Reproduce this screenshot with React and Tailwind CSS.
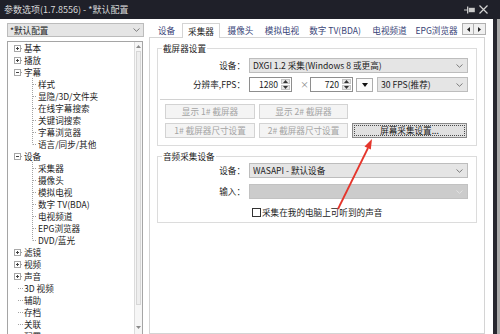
import React from "react";

const TREE = [
  { t: "基本", k: "plus" },
  { t: "播放", k: "plus" },
  { t: "字幕", k: "minus" },
  { t: "样式", k: "child" },
  { t: "显隐/3D/文件夹", k: "child" },
  { t: "在线字幕搜索", k: "child" },
  { t: "关键词搜索", k: "child" },
  { t: "字幕浏览器", k: "child" },
  { t: "语言/同步/其他", k: "last" },
  { t: "设备", k: "minus" },
  { t: "采集器", k: "child" },
  { t: "摄像头", k: "child" },
  { t: "模拟电视", k: "child" },
  { t: "数字 TV(BDA)", k: "child" },
  { t: "电视频道", k: "child" },
  { t: "EPG浏览器", k: "child" },
  { t: "DVD/蓝光", k: "last" },
  { t: "滤镜", k: "plus" },
  { t: "视频", k: "plus" },
  { t: "声音", k: "plus" },
  { t: "3D 视频", k: "leaf" },
  { t: "辅助", k: "leaf" },
  { t: "存档", k: "leaf" },
  { t: "关联", k: "leaf" },
  { t: "配置", k: "leaf" },
];

const TABS = [
  { t: "设备", w: "w-[31px]" },
  { t: "采集器", w: "w-[38px]", on: true },
  { t: "摄像头", w: "w-[41px]" },
  { t: "模拟电视", w: "w-[42px]" },
  { t: "数字 TV(BDA)", w: "w-[64px]" },
  { t: "电视频道", w: "w-[45px]" },
  { t: "EPG浏览器", w: "w-[49px]" },
];

const LINE = "#a3a3a3";

const Chevron = ({ color = "#707070" }) => (
  <svg width="7" height="4" viewBox="0 0 7 4" className="shrink-0">
    <path d="M0.5 0.5 L3.5 3.3 L6.5 0.5" fill="none" stroke={color} strokeWidth="0.9" />
  </svg>
);

const Tri = ({ down }) => (
  <svg width="5" height="3" viewBox="0 0 5 3">
    <path d={down ? "M0 0 H5 L2.5 3 Z" : "M0 3 H5 L2.5 0 Z"} fill="#333" />
  </svg>
);

const Gutter = ({ k }) => {
  if (k === "child" || k === "last")
    return (
      <svg width="30" height="12" className="shrink-0">
        <line x1="24.5" y1="0" x2="24.5" y2={k === "last" ? 6.5 : 12} stroke={LINE} strokeDasharray="1 1" />
        <line x1="25" y1="6.5" x2="29" y2="6.5" stroke={LINE} strokeDasharray="1 1" />
      </svg>
    );
  if (k === "leaf")
    return (
      <svg width="16" height="12" className="shrink-0">
        <line x1="10" y1="6.5" x2="15" y2="6.5" stroke={LINE} strokeDasharray="1 1" />
      </svg>
    );
  return (
    <svg width="16" height="12" className="shrink-0">
      <rect x="6.5" y="3.5" width="6" height="6" fill="#fff" stroke="#a8a8a8" />
      <line x1="8" y1="6.5" x2="11" y2="6.5" stroke="#444" />
      {k === "plus" && <line x1="9.5" y1="5" x2="9.5" y2="8" stroke="#444" />}
      <line x1="13" y1="6.5" x2="15" y2="6.5" stroke={LINE} strokeDasharray="1 1" />
    </svg>
  );
};

const Combo = ({ text, w, disabled }) => (
  <div
    className={`${w} h-[15px] border flex items-center pl-[3px] pr-[4px] ${
      disabled ? "bg-[#cccccc] border-[#c2c2c2]" : "bg-[#e5e5e5] border-[#bdbdbd]"
    }`}
  >
    <span className="flex-1 truncate leading-[13px]">{text}</span>
    <Chevron color={disabled ? "#e4e4e4" : "#707070"} />
  </div>
);

const Spin = ({ value }) => (
  <div className="w-[43px] h-[15px] border border-[#8e8e8e] bg-white flex">
    <div className="flex-1 text-right pr-[3px] leading-[13px]">{value}</div>
    <div className="w-[10px] flex flex-col py-px pr-px gap-px">
      <div className="flex-1 bg-[#e6e6e6] border border-[#c4c4c4] flex items-center justify-center">
        <Tri />
      </div>
      <div className="flex-1 bg-[#e6e6e6] border border-[#c4c4c4] flex items-center justify-center">
        <Tri down />
      </div>
    </div>
  </div>
);

const Btn = ({ children, w, active }) =>
  active ? (
    <div className={`${w} h-[15px] border border-[#8a8a8a] bg-[#e1e1e1] p-px text-[#1a1a1a]`}>
      <div className="w-full h-full border border-dotted border-[#4a4a4a] flex items-center justify-center leading-[11px]">
        {children}
      </div>
    </div>
  ) : (
    <div className={`${w} h-[15px] border border-[#d3d3d3] bg-[#f4f4f4] text-[#a4a4a4] flex items-center justify-center leading-[13px]`}>
      {children}
    </div>
  );

const Label = ({ children }) => (
  <span className="w-[87px] shrink-0 text-right leading-[13px]">{children}</span>
);

export default function App() {
  return (
    <div className="relative w-[500px] h-[334px] overflow-hidden flex flex-col bg-white text-[8.6px] text-[#1c1c1c] font-['Noto_Sans_CJK_SC',sans-serif]">
      {/* title bar */}
      <div className="h-[19px] shrink-0 bg-[#1f2029] flex items-center pl-[4px] pr-[12px]">
        <span className="text-[9px] leading-[12px] text-[#d9d9d9]">参数选项(1.7.8556) - *默认配置</span>
        <div className="ml-auto flex items-center gap-[4px]">
          <svg width="11" height="8" viewBox="0 0 11 8">
            <path d="M0 4 H3" stroke="#c9c9c9" strokeWidth="1" />
            <rect x="3" y="0.5" width="1.3" height="7" fill="#c9c9c9" />
            <rect x="4.8" y="1.8" width="6" height="4.4" fill="#c9c9c9" />
          </svg>
          <svg width="9" height="9" viewBox="0 0 9 9">
            <path d="M0.5 0.5 L8.5 8.5 M8.5 0.5 L0.5 8.5" stroke="#d2d2d2" strokeWidth="1.2" />
          </svg>
        </div>
      </div>

      <div className="flex flex-1 min-h-0">
        <div className="w-[493px] shrink-0 flex bg-white">
          {/* left column */}
          <div className="w-[149px] shrink-0 pl-[7px] flex flex-col">
            <div className="mt-[4px] w-[137px] h-[14px] border border-[#bcbcbc] bg-[#e5e5e5] flex items-center pl-[2px] pr-[3px]">
              <span className="flex-1 leading-[12px]">*默认配置</span>
              <Chevron />
            </div>
            <div className="mt-[4px] w-[136px] h-[294px] shrink-0 border border-[#a5a5a5] flex overflow-hidden">
              <div className="flex-1 flex flex-col">
                {TREE.map((r) => (
                  <div key={r.t} className="h-[12px] shrink-0 flex items-center">
                    <Gutter k={r.k} />
                    <span className="leading-[12px] whitespace-nowrap">{r.t}</span>
                  </div>
                ))}
              </div>
              <div className="w-[8px] shrink-0 border-l border-[#dcdcdc] bg-[#f6f6f6] flex flex-col">
                <div className="h-[9px] flex items-center justify-center">
                  <svg width="5" height="3" viewBox="0 0 5 3"><path d="M0 3 H5 L2.5 0 Z" fill="#8a8a8a" /></svg>
                </div>
                <div className="h-[254px] mx-px border border-[#d6d6d6] bg-[#eeeeee]" />
                <div className="flex-1" />
                <div className="h-[9px] mb-[2px] flex items-center justify-center">
                  <svg width="5" height="3" viewBox="0 0 5 3"><path d="M0 0 H5 L2.5 3 Z" fill="#8a8a8a" /></svg>
                </div>
              </div>
            </div>
          </div>

          {/* right column */}
          <div className="flex-1 flex flex-col">
            <div className="h-[18px] shrink-0 flex items-end pl-[2px]">
              {TABS.map((t) =>
                t.on ? (
                  <div
                    key={t.t}
                    className={`${t.w} h-[15px] -mb-px relative z-10 border border-b-0 border-[#d4d4d4] bg-white flex items-center justify-center leading-[13px] text-[#222]`}
                  >
                    {t.t}
                  </div>
                ) : (
                  <div
                    key={t.t}
                    className={`${t.w} h-[14px] flex items-center justify-center leading-[13px] whitespace-nowrap text-[#3a4578]`}
                  >
                    {t.t}
                  </div>
                )
              )}
              <div className="ml-px mb-[2px] flex">
                <div className="w-[12px] h-[12px] border border-[#b0b0b0] bg-[#f0f0f0] flex items-center justify-center">
                  <svg width="3" height="5" viewBox="0 0 3 5"><path d="M3 0 V5 L0 2.5 Z" fill="#222" /></svg>
                </div>
                <div className="w-[12px] h-[12px] border border-l-0 border-[#b0b0b0] bg-[#f0f0f0] flex items-center justify-center">
                  <svg width="3" height="5" viewBox="0 0 3 5"><path d="M0 0 V5 L3 2.5 Z" fill="#222" /></svg>
                </div>
              </div>
            </div>

            <div className="w-[336px] flex-1 border border-[#d4d4d4] bg-white px-[7px] pt-[4px]">
              <fieldset className="w-[320px] border border-[#dcdcdc] pb-[7px]">
                <legend className="ml-[4px] px-[1px] leading-[12px]">截屏器设置</legend>
                <div className="mt-[4px] h-[15px] flex items-center">
                  <Label>设备：</Label>
                  <div className="ml-[4px]">
                    <Combo text="DXGI 1.2 采集(Windows 8 或更高)" w="w-[219px]" />
                  </div>
                </div>
                <div className="mt-[4px] h-[15px] flex items-center">
                  <Label>分辨率,FPS：</Label>
                  <div className="ml-[4px]">
                    <Spin value="1280" />
                  </div>
                  <span className="w-[18px] pl-[7px] flex justify-center text-[#8a8a8a] leading-[13px]">×</span>
                  <Spin value="720" />
                  <div className="ml-[3px] w-[17px] h-[14px] border border-[#adadad] bg-[#fbfbfb] flex items-center justify-center">
                    <svg width="6" height="4" viewBox="0 0 6 4"><path d="M0 0 H6 L3 4 Z" fill="#111" /></svg>
                  </div>
                  <div className="ml-[4px]">
                    <Combo text="30 FPS(推荐)" w="w-[91px]" />
                  </div>
                </div>
                <div className="mt-[7px] mx-[2px] h-px bg-[#d2d2d2]" />
                <div className="mt-[4px] pl-[7px] flex gap-[4px]">
                  <Btn w="w-[90px]">显示 1# 截屏器</Btn>
                  <Btn w="w-[89px]">显示 2# 截屏器</Btn>
                </div>
                <div className="mt-[4px] pl-[7px] flex gap-[4px]">
                  <Btn w="w-[90px]">1# 截屏器尺寸设置</Btn>
                  <Btn w="w-[89px]">2# 截屏器尺寸设置</Btn>
                  <Btn w="w-[115px]" active>
                    屏幕采集设置...
                  </Btn>
                </div>
              </fieldset>

              <fieldset className="mt-[4px] w-[320px] border border-[#dcdcdc] pb-[4px]">
                <legend className="ml-[4px] px-[1px] leading-[12px]">音频采集设备</legend>
                <div className="mt-[1px] h-[15px] flex items-center">
                  <Label>设备：</Label>
                  <div className="ml-[4px]">
                    <Combo text="WASAPI - 默认设备" w="w-[219px]" />
                  </div>
                </div>
                <div className="mt-[6px] h-[15px] flex items-center">
                  <Label>输入：</Label>
                  <div className="ml-[4px]">
                    <Combo text="" w="w-[219px]" disabled />
                  </div>
                </div>
                <div className="mt-[7px] h-[12px] pl-[94px] flex items-center">
                  <div className="w-[9px] h-[9px] border border-[#333] bg-white shrink-0" />
                  <span className="ml-[1px] leading-[12px]">采集在我的电脑上可听到的声音</span>
                </div>
              </fieldset>
            </div>
          </div>
        </div>
        <div className="w-[4px] shrink-0 bg-[#27272f]" />
        <div className="flex-1 bg-[#a9a9a9]" />
      </div>

      {/* red annotation arrow */}
      <svg className="absolute inset-0 pointer-events-none" width="500" height="334" viewBox="0 0 500 334">
        <line x1="338" y1="209" x2="368" y2="148" stroke="#e5362c" strokeWidth="1.8" />
        <polygon points="372,139 370.8,149.5 364.5,146.5" fill="#e5362c" />
      </svg>
    </div>
  );
}
